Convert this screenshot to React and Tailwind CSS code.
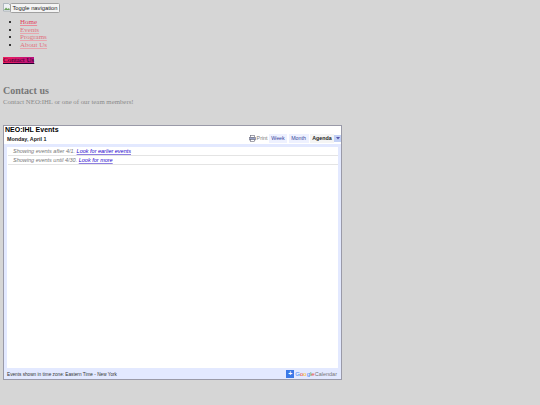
export default function App() {
  const serif = "font-['Liberation_Serif',serif]";
  const sans = "font-['Liberation_Sans',Arial,sans-serif]";
  return (
    <div className={`min-h-[405px] w-[540px] overflow-hidden bg-[#d6d6d6] pl-[3px] pt-[3px] ${serif}`}>
      <div className="flex h-[10px] items-center">
        <svg width="8" height="9" viewBox="0 0 8 9" className="mr-[-1px] self-start">
          <path d="M0.5 0.5H5.5L7.5 2.5V8H0.5Z" fill="#eef1f4" stroke="#9aa3ad" strokeWidth="0.7" />
          <path d="M1 7L3 4.5L4.5 6L6 5L7 7Z" fill="#6fa35f" />
        </svg>
        <button className={`flex h-[10px] w-[50px] items-center justify-center whitespace-nowrap rounded-[1.5px] border border-[#a0a0a0] bg-[#f4f4f4] pt-[1px] text-[5.8px] leading-none text-[#222] ${sans}`}>
          Toggle navigation
        </button>
      </div>
      <ul className="mt-[6px] list-disc pl-[17px] text-[7px] leading-[7.7px] text-black">
        <li><a className="text-[#e0425c] underline decoration-[#eb8a99]">Home</a></li>
        <li><a className="text-[#e0737f] underline decoration-[#e8a5ad]">Events</a></li>
        <li><a className="text-[#e0737f] underline decoration-[#e8a5ad]">Programs</a></li>
        <li><a className="text-[#e0737f] underline decoration-[#e8a5ad]">About Us</a></li>
      </ul>
      <div className="mt-[7px] flex">
        <a className="h-[7.5px] w-[31px] whitespace-nowrap bg-[linear-gradient(90deg,#f01c5c,#b8127e)] text-center text-[7px] leading-[7.5px] text-[#2a0030] underline">Contact Us</a>
      </div>
      <h2 className="mt-[20.5px] text-[10px] font-bold leading-[12px] text-[#777]">Contact us</h2>
      <p className="mt-[0.5px] text-[6.8px] leading-[9px] text-[#8a8a8a]">Contact NEO:IHL or one of our team members!</p>
      <div className={`mt-[19px] flex h-[255px] w-[339px] flex-col border border-[#9a9aa8] bg-white ${sans}`}>
        <div className="h-[7px] pl-[1px] text-[7px] font-bold leading-[7px] text-black">NEO:IHL Events</div>
        <div className="flex h-[11px] items-center justify-between">
          <span className="pl-[3px] text-[5.4px] font-bold text-[#222]">Monday, April 1</span>
          <div className="flex items-center text-[5.3px] text-[#444]">
            <svg width="7" height="7" viewBox="0 0 7 7" className="mr-[0.5px]">
              <rect x="1.5" y="0.5" width="4" height="2" fill="none" stroke="#667" strokeWidth="0.6" />
              <rect x="0.5" y="2.5" width="6" height="2.5" fill="#9aa4c8" stroke="#667" strokeWidth="0.5" />
              <rect x="1.5" y="4.5" width="4" height="2" fill="#fff" stroke="#667" strokeWidth="0.6" />
            </svg>
            <span className="mr-[1.5px] text-[#777]">Print</span>
            <span className="mr-[1.5px] flex h-[9px] w-[18px] items-center justify-center bg-[#eef1ff] text-[#33449a]">Week</span>
            <span className="mr-[1.5px] flex h-[9px] w-[20px] items-center justify-center bg-[#eef1ff] text-[#33449a]">Month</span>
            <span className="flex h-[9px] w-[24px] items-center justify-center bg-[#f4f4f4] font-bold text-[#222]">Agenda</span>
            <span className="flex h-[7px] w-[7px] items-center justify-center bg-[#c3d1f5]">
              <svg width="4" height="3" viewBox="0 0 4 3"><path d="M0 0H4L2 2.5Z" fill="#55a" /></svg>
            </span>
          </div>
        </div>
        <div className="flex min-h-0 flex-1 flex-col bg-[#e3e9ff] px-[3px] pt-[3px]">
          <div className="flex-1 bg-white pl-[1px] text-[5.5px] text-[#777]">
            <div className="flex h-[8.5px] items-center border-b border-[#e4e4e4] pl-[5px] italic">
              Showing events after 4/1.&nbsp;<a className="text-[#2200cc] underline decoration-[#8f80e0]">Look for earlier events</a>
            </div>
            <div className="flex h-[9px] items-center border-b border-[#e4e4e4] pl-[5px] italic">
              Showing events until 4/30.&nbsp;<a className="text-[#2200cc] underline decoration-[#8f80e0]">Look for more</a>
            </div>
          </div>
          <div className="flex h-[11px] items-center justify-between pr-[1px] text-[4.7px] text-[#333]">
            <span className="pt-[1px]">Events shown in time zone: Eastern Time - New York</span>
            <div className="flex items-center">
              <span className="mr-[1px] flex h-[8px] w-[8px] items-center justify-center bg-[#3b78e7] text-[7px] font-bold leading-none text-white">+</span>
              <span className="text-[6px] leading-none">
                <span className="text-[#4285f4]">G</span><span className="text-[#ea4335]">o</span><span className="text-[#fbbc05]">o</span><span className="text-[#4285f4]">g</span><span className="text-[#34a853]">l</span><span className="text-[#ea4335]">e</span>
              </span>
              <span className="text-[5.5px] text-[#777]">Calendar</span>
            </div>
          </div>
        </div>
      </div>
    </div>
  );
}
